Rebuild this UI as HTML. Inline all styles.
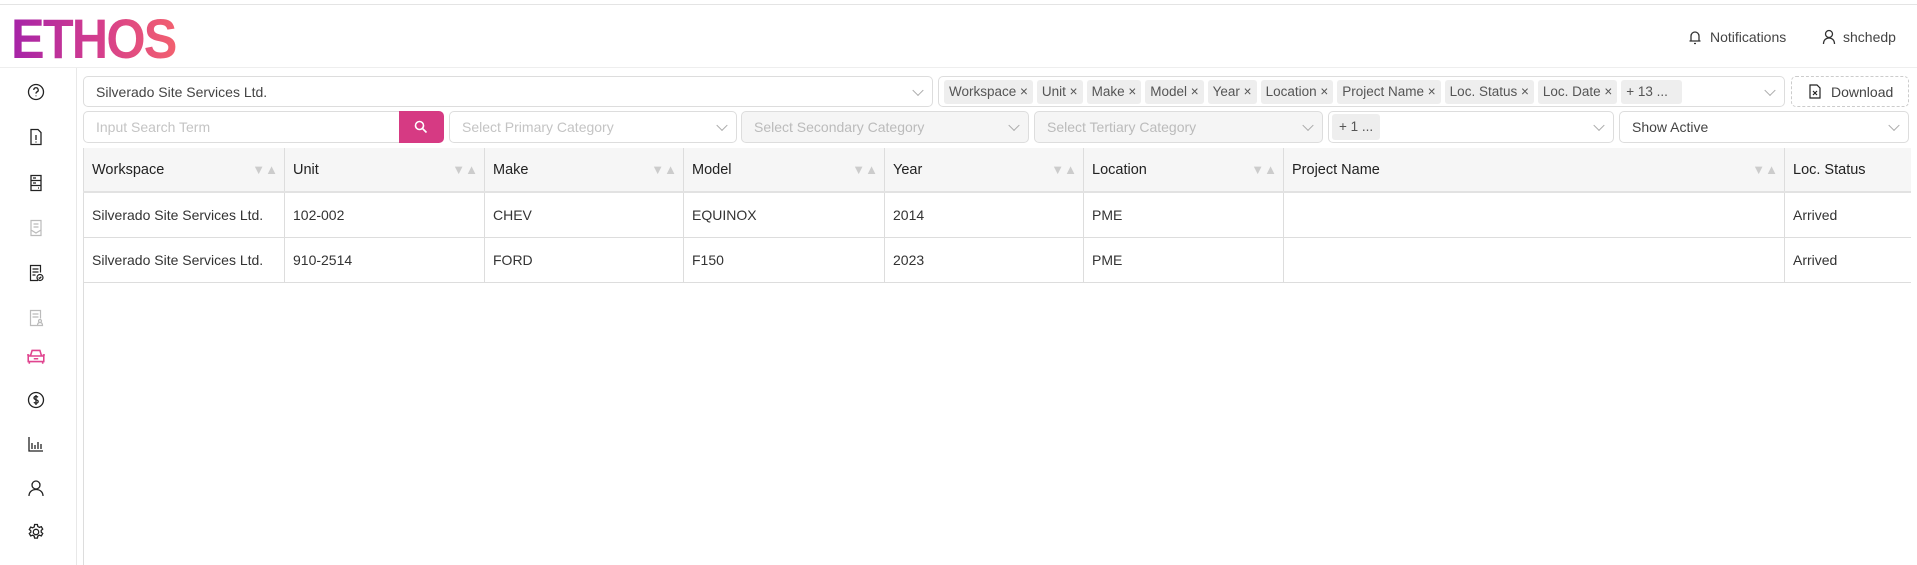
<!DOCTYPE html>
<html><head><meta charset="utf-8"><style>
*{box-sizing:border-box;margin:0;padding:0}
body{width:1917px;height:565px;background:#fff;font-family:"Liberation Sans",sans-serif;font-size:14px;color:#333;position:relative;overflow:hidden}
.abs{position:absolute}
.topline{left:0;top:4px;width:1917px;height:1px;background:#e4e4e4}
.hdrline{left:0;top:67px;width:1917px;height:1px;background:#eee}
.side{left:76px;top:68px;width:1px;height:497px;background:#e8e8e8}
.logo{left:11px;top:11px;font-size:56px;font-weight:bold;letter-spacing:-2px;background:linear-gradient(90deg,#a523a8,#d63f8c 55%,#f2606f);-webkit-background-clip:text;background-clip:text;color:transparent;line-height:56px;transform:scaleX(0.9);transform-origin:left}
.box{position:absolute;border:1px solid #ddd;border-radius:5px;background:#fff;display:flex;align-items:center;padding-left:12px;font-size:14px;color:#444}
.dis{background:#f5f5f5;color:#bbb}
.chev{position:absolute;right:10px;top:50%;width:8px;height:8px;border-right:1px solid #aaa;border-bottom:1px solid #aaa;transform:translateY(-70%) rotate(45deg)}
.tag{background:#eee;border-radius:3px;padding:0 5px;height:24px;line-height:24px;margin-right:4px;font-size:13.5px;color:#555;white-space:nowrap}
table{position:absolute;left:83px;top:148px;border-collapse:collapse;width:1827px;table-layout:fixed}
th{height:44px;background:#f6f6f6;text-align:left;font-weight:normal;color:#222;padding-left:8px;border-right:1px solid #ddd;border-bottom:2px solid #e2e2e2;position:relative;font-size:14.5px}
td{height:45px;padding-left:8px;border-right:1px solid #ddd;border-bottom:1px solid #ddd;color:#333;font-size:14px}
tr td:first-child,tr th:first-child{border-left:1px solid #ddd}
.sort{position:absolute;right:6px;top:14px;font-size:13px;color:#ccc;letter-spacing:0}
.ic{position:absolute;left:27px;width:18px;height:18px}
</style></head><body>
<div class="abs topline"></div>
<div class="abs logo">ETHOS</div>
<div class="abs hdrline"></div>
<div class="abs side"></div>
<svg class="abs" style="left:1688px;top:29px" width="14" height="16" viewBox="0 0 14 16" fill="none" stroke="#333" stroke-width="1.3"><path d="M3 12V7a4 4 0 0 1 8 0v5M1.5 12h11M6 14.5h2"/></svg>
<div class="abs" style="left:1710px;top:29px;font-size:14px;color:#444">Notifications</div>
<svg class="abs" style="left:1822px;top:29px" width="14" height="16" viewBox="0 0 14 16" fill="none" stroke="#333" stroke-width="1.3"><circle cx="7" cy="5" r="3.5"/><path d="M1.5 15c0-4 2.5-6 5.5-6s5.5 2 5.5 6"/></svg>
<div class="abs" style="left:1843px;top:29px;font-size:14px;color:#444">shchedp</div>
<svg class="ic" style="top:83px" viewBox="0 0 18 18" fill="none" stroke="#222" stroke-width="1.3"><circle cx="9" cy="9" r="7.5"/><path d="M6.8 7a2.2 2.2 0 1 1 3 2c-.7.4-.8.8-.8 1.6M9 12.5v.8"/></svg>
<svg class="ic" style="top:128px" viewBox="0 0 18 18" fill="none" stroke="#222" stroke-width="1.3"><path d="M4 1.5h7l3 3v12H4z M9 7v5M9 13.5v1"/></svg>
<svg class="ic" style="top:174px" viewBox="0 0 18 18" fill="none" stroke="#222" stroke-width="1.3"><path d="M4 1.5h10v15H4zM4 6.5h10M4 11.5h10M6 4h3M6 9h3M11 14h1"/></svg>
<svg class="ic" style="top:219px" viewBox="0 0 18 18" fill="none" stroke="#bbb" stroke-width="1.2"><path d="M4 1.5h10v15H4zM6.5 5h5M6.5 8h5M4 11l5 3 5-3"/></svg>
<svg class="ic" style="top:264px" viewBox="0 0 18 18" fill="none" stroke="#222" stroke-width="1.2"><path d="M11 16.5H3.5v-15h10v7M5.5 5h6M5.5 8h6M5.5 11h3"/><circle cx="13" cy="13.5" r="3"/><path d="M11.7 13.5l1 1 1.6-1.8"/></svg>
<svg class="ic" style="top:309px" viewBox="0 0 18 18" fill="none" stroke="#bbb" stroke-width="1.2"><path d="M10 16.5H3.5v-15h10v8M5.5 5h6M5.5 8h6"/><circle cx="13" cy="12" r="1.5"/><path d="M10.5 16.5c0-2 1-3 2.5-3s2.5 1 2.5 3z"/></svg>
<svg class="ic" style="top:346px;left:26px;width:20px;height:20px" viewBox="0 0 18 18" fill="none" stroke="#e0448f" stroke-width="1.4"><path d="M2 9h14v5H2zM4 9l1.5-5h7L14 9M3 14v2M15 14v2M1 8h2M15 8h2M7 11.5h4"/></svg>
<svg class="ic" style="top:391px" viewBox="0 0 18 18" fill="none" stroke="#222" stroke-width="1.3"><circle cx="9" cy="9" r="7.5"/><path d="M11 6.3c-.5-.6-1.2-.9-2-.9-1.2 0-2 .6-2 1.6 0 2.2 4.200 1.2 4.2 3.5 0 1-1 1.7-2.2 1.7-.9 0-1.7-.4-2.1-1M9 4v10"/></svg>
<svg class="ic" style="top:435px" viewBox="0 0 18 18" fill="none" stroke="#222" stroke-width="1.3"><path d="M2 2v14h14M5 14V8M8 14V10M11 14V7M14 14V9"/></svg>
<svg class="ic" style="top:479px" viewBox="0 0 18 18" fill="none" stroke="#222" stroke-width="1.3"><circle cx="9" cy="6" r="4"/><path d="M2 17c0-4 3-6.5 7-6.5s7 2.5 7 6.5"/></svg>
<svg class="ic" style="top:523px" viewBox="0 0 18 18" fill="none" stroke="#222" stroke-width="1.3"><circle cx="9" cy="9" r="2.7"/><path d="M7.6 1.5h2.8l.4 2 1.6.9 1.9-.7 1.4 2.4-1.5 1.3v1.8l1.5 1.3-1.4 2.4-1.9-.7-1.6.9-.4 2H7.6l-.4-2-1.6-.9-1.9.7-1.4-2.4 1.5-1.3V7.8L2.3 6.5l1.4-2.4 1.9.7 1.6-.9z"/></svg>
<div class="box" style="left:83px;top:76px;width:850px;height:31px;color:#444">Silverado Site Services Ltd.<span class="chev"></span></div>
<div class="box" style="left:938px;top:76px;width:847px;height:31px;padding-left:5px">
<span class="tag">Workspace ×</span><span class="tag">Unit ×</span><span class="tag">Make ×</span><span class="tag">Model ×</span><span class="tag">Year ×</span><span class="tag">Location ×</span><span class="tag">Project Name ×</span><span class="tag">Loc. Status ×</span><span class="tag">Loc. Date ×</span><span class="tag" style="padding-right:14px">+ 13 ...</span><span class="chev"></span></div>
<div class="box" style="left:1791px;top:76px;width:118px;height:31px;border:1px dashed #ccc;padding-left:17px">
<svg width="12" height="15" viewBox="0 0 12 15" fill="none" stroke="#222" stroke-width="1.2"><path d="M1 1h7l3 3v10H1zM4 7l4 4M8 7l-4 4"/></svg><span style="margin-left:10px;color:#444">Download</span></div>
<div class="box" style="left:83px;top:111px;width:320px;height:32px;color:#c4c4c4;border-radius:5px 0 0 5px">Input Search Term</div>
<div class="abs" style="left:399px;top:111px;width:45px;height:32px;background:#d63a83;border-radius:0 5px 5px 0"><svg style="position:absolute;left:15px;top:9px" width="14" height="14" viewBox="0 0 14 14" fill="none" stroke="#fff" stroke-width="1.6"><circle cx="5.5" cy="5.5" r="4"/><path d="M8.5 8.5l4 4"/></svg></div>
<div class="box" style="left:449px;top:111px;width:288px;height:32px;color:#c4c4c4">Select Primary Category<span class="chev"></span></div>
<div class="box dis" style="left:741px;top:111px;width:288px;height:32px">Select Secondary Category<span class="chev"></span></div>
<div class="box dis" style="left:1034px;top:111px;width:289px;height:32px">Select Tertiary Category<span class="chev"></span></div>
<div class="box" style="left:1328px;top:111px;width:286px;height:32px;padding-left:3px"><span class="tag" style="height:26px;line-height:26px;padding:0 7px">+ 1 ...</span><span class="chev"></span></div>
<div class="box" style="left:1619px;top:111px;width:290px;height:32px;color:#444">Show Active<span class="chev"></span></div>
<table>
<colgroup><col style="width:201px"><col style="width:200px"><col style="width:199px"><col style="width:201px"><col style="width:199px"><col style="width:200px"><col style="width:501px"><col style="width:126px"></colgroup>
<tr><th>Workspace<span class="sort">▼▲</span></th><th>Unit<span class="sort">▼▲</span></th><th>Make<span class="sort">▼▲</span></th><th>Model<span class="sort">▼▲</span></th><th>Year<span class="sort">▼▲</span></th><th>Location<span class="sort">▼▲</span></th><th>Project Name<span class="sort">▼▲</span></th><th style="border-right:none">Loc. Status</th></tr>
<tr><td>Silverado Site Services Ltd.</td><td>102-002</td><td>CHEV</td><td>EQUINOX</td><td>2014</td><td>PME</td><td></td><td style="border-right:none">Arrived</td></tr>
<tr><td>Silverado Site Services Ltd.</td><td>910-2514</td><td>FORD</td><td>F150</td><td>2023</td><td>PME</td><td></td><td style="border-right:none">Arrived</td></tr>
</table>
<div class="abs" style="left:83px;top:282px;width:1px;height:283px;background:#ddd"></div>
</body></html>
